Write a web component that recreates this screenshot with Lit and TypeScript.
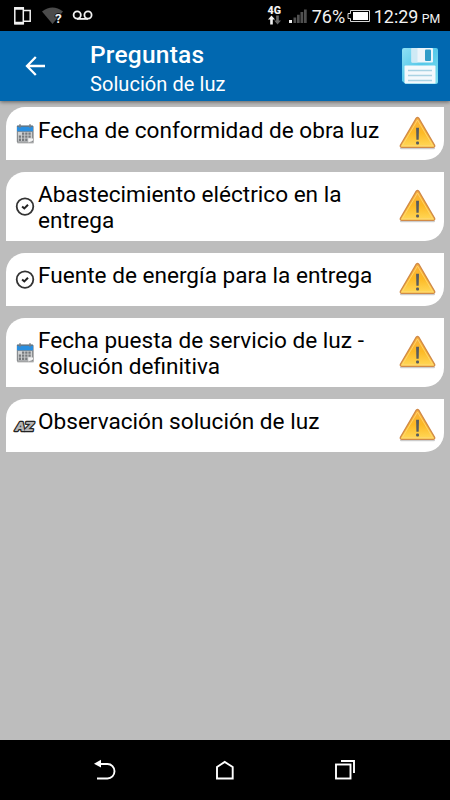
import { LitElement, html, css, svg } from "lit";
import { customElement, property } from "lit/decorators.js";

type Kind = "date" | "check" | "text";

const calendar = svg`
  <rect x="1" y="2" width="17" height="17.500" rx="1" fill="#bdbdbd"/>
  <rect x=".8" y="1.500" width="16.400" height="17" rx="1" fill="#8a8d90"/>
  <rect x="2" y="8" width="14" height="9.500" fill="#cfd1d2"/>
  <rect x="1" y="2.500" width="16" height="4.800" fill="#2a8fe0"/>
  <rect x="1" y="1.700" width="16" height="1.100" fill="#5b7387"/>
  <path d="M4 .3v3.400M14 .3v3.400" stroke="#777f86" stroke-width="1.500"/>
  <path d="M6 8.500h2.300v2.300H6zM9.200 8.500h2.300v2.300H9.200zM12.400 8.500h2.300v2.300h-2.300zM2.800 11.500h2.300v2.300H2.800zM6 11.500h2.300v2.300H6zM9.200 11.500h2.300v2.300H9.200zM12.400 11.500h2.300v2.300h-2.300zM2.800 14.600h2.300v2.300H2.800zM6 14.600h2.300v2.300H6zM9.200 14.600h2.300v2.300H9.200z" fill="#777a7d"/>
  <path d="M12.300 18.500v-4h4.700v2z" fill="#f3f3f3"/>`;

const check = svg`
  <circle cx="9" cy="9.600" r="8.300" fill="#fff" stroke="#333" stroke-width="1.800"/>
  <path d="M6.100 9.400l2.200 2 3.700-3.700" fill="none" stroke="#222" stroke-width="2"/>`;

const letters = svg`
  <text x="-.4" y="14.700" class="az" textLength="18" lengthAdjust="spacingAndGlyphs">AZ</text>
  <text x="-.4" y="14.700" class="az face" textLength="18" lengthAdjust="spacingAndGlyphs" aria-hidden="true">AZ</text>`;

@customElement("question-row")
export class QuestionRow extends LitElement {
  @property() kind: Kind = "date";
  @property({ attribute: false }) lines: string[] = [];

  static styles = css`
    :host { display: flex; align-items: center; box-sizing: border-box; background: #fff;
      border-radius: 19px 0 19px 0; padding: 0 8px 0 9px; }
    .icon { width: 20px; height: 20px; flex: none; overflow: visible; }
    .label { flex: 1; margin-left: 3px; align-self: flex-start; padding-top: 11px; font-size: 22.6px; line-height: 26px;
      color: #000; white-space: nowrap; }
    .line { display: block; }
    :host(:not(:first-child)) .label { padding-top: 10px; }
    .az { font: italic 900 12.5px "Roboto", sans-serif; fill: #222; stroke: #222; stroke-width: 2.4px; stroke-linejoin: round; }
    .face { fill: #b5b5b5; stroke: #b5b5b5; stroke-width: .2px; }
    .warn { width: 37px; height: 34px; flex: none; overflow: visible; }
  `;

  render() {
    const icon = this.kind === "date" ? calendar : this.kind === "check" ? check : letters;
    return html`
      <svg class="icon" viewBox="-1 0 20 20">${icon}</svg>
      <div class="label">${this.lines.map((t) => html`<span class="line">${t}</span>`)}</div>
      <svg class="warn" viewBox="0 1 37 34">
        <defs><linearGradient id="g" x1="0" y1="0" x2="0" y2="1">
          <stop offset="0" stop-color="#f9b040"/><stop offset=".5" stop-color="#fdb924"/><stop offset="1" stop-color="#ffd95a"/>
        </linearGradient></defs>
        <path d="M2 32.300h33" stroke="#000" stroke-opacity=".2" stroke-width="2" stroke-linecap="round"/>
        <path d="M17.200 2.200q1.300-1.300 2.600 0L35.600 29.300q.6 1.900-1.200 2H2.600q-1.800-.1-1.200-2z" fill="url(#g)" stroke="#d18a48" stroke-width="1.300"/>
        <path d="M18.500 4L33.800 29.800H3.200z" fill="none" stroke="#ffd778" stroke-width=".8" stroke-linejoin="round"/>
        <path d="M17.100 11.800h2.900l-.3 12h-2.300z" fill="#575c60"/>
        <rect x="17.100" y="25.600" width="2.900" height="2.800" rx="1" fill="#575c60"/>
      </svg>`;
  }
}

@customElement("app-root")
export class AppRoot extends LitElement {
  static styles = css`
    :host { display: flex; flex-direction: column; width: 450px; height: 800px; overflow: hidden;
      background: #bdbdbd; font-family: "Roboto", sans-serif; }
    svg { display: block; flex: none; }
    .status { height: 31px; flex: none; background: #000; }
    .st { font-family: "Roboto", sans-serif; fill: #f2f2f2; }
    .bar { height: 70px; flex: none; background: #0168b0; color: #fff; display: flex; align-items: center;
      box-shadow: 0 1px 4px rgba(0,0,0,.5); padding: 0 11px 0 24px; }
    .titles { flex: 1; margin-left: 44px; padding-top: 6px; white-space: nowrap; }
    .title { font-size: 24.5px; line-height: 29px; font-weight: 500; letter-spacing: .22px; }
    .sub { font-size: 20px; line-height: 29px; letter-spacing: .06px; padding-top: 1px; margin-bottom: -1px; }
    .list { flex: 1; padding: 6px 6px 0; display: flex; flex-direction: column; gap: 12px; }
    .one { height: 53px; }
    .two { height: 69px; }
    .nav { height: 60px; flex: none; background: #000; }
  `;

  render() {
    return html`
      <svg class="status" width="450" height="31" viewBox="0 0 450 31">
        <g fill="none" stroke="#f2f2f2" stroke-width="1.500">
          <rect x="14.800" y="7.800" width="8.500" height="16"/>
          <path d="M14.500 8.500h9M14.500 23h9" stroke-width="2.500"/>
          <path d="M23.500 10.500h6.700v10.800h-6.700"/>
          <circle cx="77.200" cy="15" r="3.600" stroke-width="1.800"/><circle cx="88" cy="15" r="3.600" stroke-width="1.800"/>
          <path d="M77 18.900h11" stroke-width="1.800"/>
        </g>
        <path d="M42 11.500q10.500-8 21 0L52.500 24z" fill="#4b4b4b"/>
        <text x="55" y="23" class="st" font-size="13.500" font-weight="700" stroke="#000" stroke-width="1.500" paint-order="stroke">?</text>
        <text x="267.500" y="14.200" class="st" font-size="11.500" font-weight="900" textLength="13.500" lengthAdjust="spacingAndGlyphs">4G</text>
        <path d="M271.500 15.500l3.500 4h-2.200v5h-2.600v-5H268z" fill="#f2f2f2"/>
        <path d="M277.500 24.500l3.500-4h-2.200v-5h-2.600v5H274.200z" fill="#666"/>
        <rect x="289" y="20" width="3" height="3" fill="#f2f2f2"/>
        <path d="M293.500 17.500h2.700V23h-2.700zM297 14.800h2.700V23H297zM300.500 12h2.700v11h-2.700zM304 9.500h2.700V23H304z" fill="#505050"/>
        <text x="311.700" y="22.700" class="st" font-size="18" textLength="33.500" lengthAdjust="spacingAndGlyphs">76%</text>
        <path d="M350.500 10.500h19v11h-19v-3h-2.500v-5h2.500z" fill="none" stroke="#d8d8d8"/>
        <rect x="353" y="12" width="15" height="8" fill="#fff"/>
        <text x="373.800" y="22.700" class="st" font-size="18.500" textLength="44.500" lengthAdjust="spacingAndGlyphs">12:29</text>
        <text x="421.800" y="22.700" class="st" font-size="12.500" textLength="18.500" lengthAdjust="spacingAndGlyphs">PM</text>
      </svg>
      <div class="bar">
        <svg width="22" height="22" viewBox="0 0 22 22"><path d="M21 11H3.500M11.800 2L3 11l8.800 9" fill="none" stroke="#fff" stroke-width="2.300"/></svg>
        <div class="titles"><div class="title">Preguntas</div><div class="sub">Solución de luz</div></div>
        <svg width="38" height="38" viewBox="0 0 38 38">
          <defs><linearGradient id="d" x1="0" y1="0" x2="1" y2="1">
            <stop offset="0" stop-color="#8fe0f5"/><stop offset=".5" stop-color="#55c8e9"/><stop offset="1" stop-color="#7fe0f0"/>
          </linearGradient></defs>
          <path d="M3 1h32q2 0 2 2v31.500q0 2.500-2.500 2.500H4.500L1 34V3q0-2 2-2z" fill="url(#d)"/>
          <rect x="10.500" y="1" width="21.500" height="14.500" rx="1" fill="#edf5fa"/>
          <rect x="10.500" y="1" width="6" height="14.500" fill="#cfeaf5"/>
          <rect x="24" y="2.500" width="6" height="11.500" rx="1" fill="#2f9cc8"/>
          <rect x="3.500" y="18.500" width="31" height="18" rx="1" fill="#f4f9fc"/>
          <path d="M7 23.500h24M7 28.500h24M7 33.500h24" stroke="#a9d3e3" stroke-width="1.400"/>
        </svg>
      </div>
      <div class="list">
        <question-row class="one" kind="date" .lines=${["Fecha de conformidad de obra luz"]}></question-row>
        <question-row class="two" kind="check" .lines=${["Abastecimiento eléctrico en la", "entrega"]}></question-row>
        <question-row class="one" kind="check" .lines=${["Fuente de energía para la entrega"]}></question-row>
        <question-row class="two" kind="date" .lines=${["Fecha puesta de servicio de luz -", "solución definitiva"]}></question-row>
        <question-row class="one" kind="text" .lines=${["Observación solución de luz"]}></question-row>
      </div>
      <svg class="nav" width="450" height="60" viewBox="0 0 450 60">
        <g fill="none" stroke="#fff" stroke-width="1.900">
          <path d="M99 24h8.500a7 7.250 0 0 1 0 14.500H97"/>
          <path d="M217 38.500V27l7.700-5 8 5v11.500z"/>
          <rect x="336" y="24.500" width="14.500" height="14"/>
          <path d="M341 21h13v12"/>
        </g>
        <path d="M94 23.700l7-3.900v7.800z" fill="#fff"/>
      </svg>`;
  }
}
